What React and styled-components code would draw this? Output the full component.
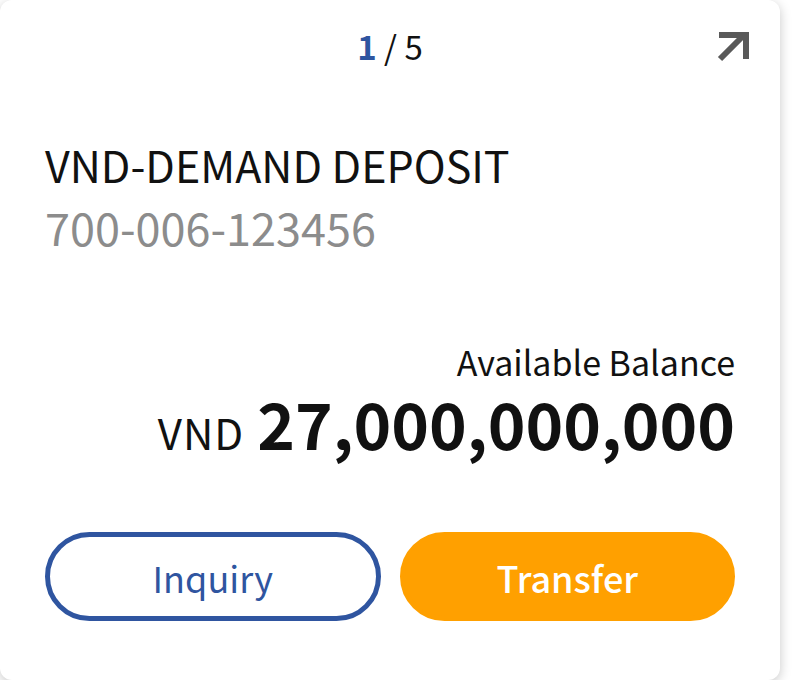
import React from 'react';
import styled, { createGlobalStyle } from 'styled-components';

const GlobalStyle = createGlobalStyle`
  html, body {
    margin: 0;
    padding: 0;
    background: #ffffff;
  }
  body {
    font-family: 'Noto Sans CJK KR', 'Noto Sans', sans-serif;
    color: #111;
  }
`;

const Card = styled.div`
  box-sizing: border-box;
  width: 780px;
  height: 680px;
  background: #fff;
  border-radius: 12px;
  box-shadow: 0 3px 12px rgba(0, 0, 0, 0.22);
  padding: 0 45px;
  display: flex;
  flex-direction: column;
`;

const Header = styled.div`
  display: grid;
  grid-template-columns: 1fr auto 1fr;
  align-items: center;
  height: 92px;
`;

const Pager = styled.div`
  grid-column: 2;
  font-size: 33px;
  line-height: 1;
  span {
    font-weight: 700;
    color: #2f55a0;
  }
`;

const Expand = styled.button`
  grid-column: 3;
  justify-self: end;
  margin-right: -14px;
  border: 0;
  padding: 0;
  background: none;
  width: 32px;
  height: 32px;
  cursor: pointer;
`;

const Title = styled.div`
  font-size: 43px;
  line-height: 60px;
  margin-top: 42px;
`;

const AccountNo = styled.div`
  font-size: 45px;
  line-height: 66px;
  color: #8c8c8c;
`;

const Balance = styled.div`
  margin-top: 78px;
  display: flex;
  flex-direction: column;
  align-items: flex-end;
`;

const BalanceLabel = styled.div`
  font-size: 34px;
  line-height: 48px;
`;

const Amount = styled.div`
  display: flex;
  align-items: baseline;
  gap: 13px;
`;

const Currency = styled.span`
  font-size: 42px;
  line-height: 50px;
  letter-spacing: 1px;
`;

const Value = styled.span`
  font-size: 64px;
  line-height: 72px;
  font-weight: 700;
`;

const Actions = styled.div`
  display: grid;
  grid-template-columns: 1fr 1fr;
  gap: 19px;
  margin-top: 74px;
`;

const ActionButton = styled.button`
  box-sizing: border-box;
  height: 89px;
  border-radius: 45px;
  font-family: inherit;
  font-size: 36px;
  font-weight: ${({ primary }) => (primary ? 500 : 400)};
  cursor: pointer;
  border: 5px solid ${({ primary }) => (primary ? '#ffa000' : '#2f55a0')};
  background: ${({ primary }) => (primary ? '#ffa000' : '#fff')};
  color: ${({ primary }) => (primary ? '#fff' : '#2f55a0')};
`;

const ExpandIcon = () => (
  <svg width="32" height="32" viewBox="0 0 32 32">
    <path d="M3 29 L27 5" stroke="#595959" strokeWidth="6" fill="none" />
    <path d="M2 5 H29 V29" stroke="#595959" strokeWidth="6" fill="none" strokeLinejoin="miter" />
  </svg>
);

const App = () => {
  return (
    <>
      <GlobalStyle />
      <Card>
        <Header>
          <Pager>
            <span>1</span> / 5
          </Pager>
          <Expand aria-label="expand">
            <ExpandIcon />
          </Expand>
        </Header>
        <Title>VND-DEMAND DEPOSIT</Title>
        <AccountNo>700-006-123456</AccountNo>
        <Balance>
          <BalanceLabel>Available Balance</BalanceLabel>
          <Amount>
            <Currency>VND</Currency>
            <Value>27,000,000,000</Value>
          </Amount>
        </Balance>
        <Actions>
          <ActionButton>Inquiry</ActionButton>
          <ActionButton primary>Transfer</ActionButton>
        </Actions>
      </Card>
    </>
  );
};

export default App;
